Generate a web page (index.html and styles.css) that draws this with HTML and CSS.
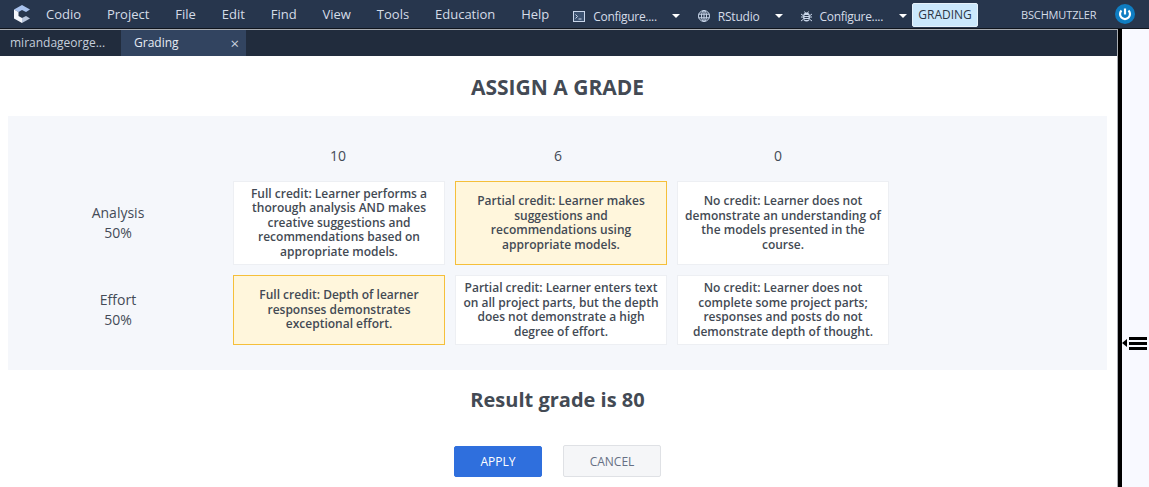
FILE: index.html
```html
<!DOCTYPE html>
<html lang="en">
<head>
  <meta charset="UTF-8" />
  <title>Grading</title>
  <link rel="stylesheet" href="styles.css">
</head>
<body>
  <header class="menubar">
    <svg class="logo" width="16" height="18" viewBox="0 0 16 18">
      <polygon points="8,0 16,4.500 12,7 8,5 4.500,7 0,4.500" fill="#a9c3ee"/>
      <polygon points="0,4.500 4.500,7 4.500,11 8,13 8,18 0,13.500" fill="#f4f6fb"/>
      <polygon points="8,13 12,11 16,13.500 8,18" fill="#b9c6dc"/>
    </svg>
    <nav class="menu">
      <span>Codio</span><span>Project</span><span>File</span><span>Edit</span><span>Find</span><span>View</span><span>Tools</span><span>Education</span><span>Help</span>
    </nav>
    <div class="runner runner-first">
      <svg width="12" height="11" viewBox="0 0 12 11" fill="none" stroke="#c9d6ea"><rect x="0.500" y="0.500" width="11" height="10" fill="#3c5270"/><path d="M2.500 3.500l2 2-2 2M5.500 8h3"/></svg>
      <span class="runner-name runner-name-cut">Configure....</span>
      <i class="caret"></i>
    </div>
    <div class="runner runner-second">
      <svg width="12" height="12" viewBox="0 0 12 12" fill="none" stroke="#c9d6ea"><circle cx="6" cy="6" r="5.500"/><ellipse cx="6" cy="6" rx="2.500" ry="5.500"/><path d="M0.500 4.200h11M0.500 7.800h11M6 .5v11"/></svg>
      <span class="runner-name runner-name-tight">RStudio</span>
      <i class="caret"></i>
    </div>
    <div class="runner runner-third">
      <svg width="11" height="12" viewBox="0 0 11 12" fill="none">
        <ellipse cx="5.500" cy="7" rx="3.500" ry="4.500" fill="#c9d6ea"/>
        <path d="M3.500 5.500h4M3.500 7.500h4M3.500 9.500h4" stroke="#27364d"/>
        <path d="M3.500 1.500l1 1.500M7.500 1.500l-1 1.500M0 4l2 1.500M11 4L9 5.500M0 7h2M11 7H9M0 11l2-1.500M11 11L9 9.500" stroke="#c9d6ea"/>
      </svg>
      <span class="runner-name runner-name-cut">Configure....</span>
      <i class="caret caret-wide"></i>
    </div>
    <button class="grading-btn">GRADING</button>
    <span class="username">BSCHMUTZLER</span>
    <svg class="power" width="20" height="20" viewBox="0 0 20 20">
      <circle cx="10" cy="10" r="10" fill="#0f7dc2"/>
      <path d="M6.500 6.500a5 5 0 1 0 7 0" fill="none" stroke="#fff" stroke-width="2.200"/>
      <path d="M10 4.500v6" stroke="#fff" stroke-width="2.200"/>
    </svg>
  </header>

  <div class="workspace">
    <div class="left-pane">
      <div class="tabs">
        <div class="tab">mirandageorge...</div>
        <div class="tab tab-active"><span>Grading</span><span class="tab-close">×</span></div>
      </div>
      <main class="grade-page">
        <h1>ASSIGN A GRADE</h1>
        <section class="rubric">
          <div class="rubric-head">
            <div></div>
            <div>10</div>
            <div>6</div>
            <div>0</div>
          </div>
          <div class="rubric-row row-tall">
            <div class="criterion">Analysis<br>50%</div>
            <div class="cell">Full credit: Learner performs a thorough analysis AND makes creative suggestions and recommendations based on appropriate models.</div>
            <div class="cell selected">Partial credit: Learner makes suggestions and recommendations using appropriate models.</div>
            <div class="cell">No credit: Learner does not demonstrate an understanding of the models presented in the course.</div>
          </div>
          <div class="rubric-row row-short">
            <div class="criterion">Effort<br>50%</div>
            <div class="cell selected">Full credit: Depth of learner responses demonstrates exceptional effort.</div>
            <div class="cell">Partial credit: Learner enters text on all project parts, but the depth does not demonstrate a high degree of effort.</div>
            <div class="cell">No credit: Learner does not complete some project parts; responses and posts do not demonstrate depth of thought.</div>
          </div>
        </section>
        <h2>Result grade is 80</h2>
        <div class="actions">
          <button class="btn btn-apply">APPLY</button>
          <button class="btn btn-cancel">CANCEL</button>
        </div>
      </main>
    </div>
    <aside class="right-pane">
      <div class="handle">
        <i class="handle-arrow"></i>
        <div class="handle-lines"><b></b><b></b><b></b></div>
      </div>
    </aside>
  </div>
</body>
</html>
```

FILE: styles.css
```css
html, body {
  margin: 0;
  padding: 0;
  height: 487px;
  overflow: hidden;
}

body {
  font-family: 'Open Sans', sans-serif;
  color: #444b57;
  background: #fff;
}

/* Top menu */
.menubar {
  display: flex;
  align-items: center;
  height: 29px;
  box-sizing: border-box;
  padding-left: 14px;
  border-bottom: 1px solid #10151d;
  background: #27364d;
  color: #d5dce8;
  font-size: 13px;
}

.logo {
  flex: none;
}

.menu {
  display: flex;
  gap: 25.900px;
  margin: 0 0 1px 16px;
  white-space: nowrap;
}

.runner {
  display: flex;
  align-items: center;
  margin-top: 4px;
  white-space: nowrap;
  font-size: 12px;
}

.runner-name {
  margin-left: 8px;
}

.runner-name-cut {
  letter-spacing: -0.3px;
}

.runner-name-tight {
  letter-spacing: -0.2px;
}

.runner-first { margin-left: 24px; }
.runner-second { margin-left: 18px; }
.runner-third { margin-left: 18px; }

.caret {
  width: 0;
  height: 0;
  margin-left: 15px;
  border-left: 4px solid transparent;
  border-right: 4px solid transparent;
  border-top: 4px solid #fff;
}

.caret-wide {
  margin-left: 16px;
}

.grading-btn {
  margin: 1px 0 0 5px;
  width: 66px;
  height: 24px;
  padding: 0;
  border: 1px solid #e6f2fb;
  border-radius: 2px;
  background: #cbe8fc;
  color: #2b3645;
  font: 12px 'Open Sans', sans-serif;
}

.username {
  margin-left: 43px;
  font-size: 11px;
  letter-spacing: -0.15px;
}

.power {
  margin-left: 19px;
}

/* Panes */
.workspace {
  display: flex;
  height: 458px;
  background: #000;
}

.left-pane {
  width: 1118px;
  box-sizing: border-box;
  border-right: 1px solid #a9adb2;
  background: #fff;
}

.tabs {
  display: flex;
  height: 26px;
  border-top: 1px solid #a9adb2;
  background: #212c3d;
  font-size: 12px;
  color: #c5cedb;
}

.tab {
  width: 121px;
  box-sizing: border-box;
  padding-left: 10px;
  line-height: 26px;
  white-space: nowrap;
}

.tab-active {
  width: 125px;
  display: flex;
  justify-content: space-between;
  padding: 0 7px 0 13px;
  background: #324460;
  color: #e6ebf3;
}

.tab-close {
  font-size: 15px;
  color: #c9d1dd;
}

.right-pane {
  flex: 1;
  margin-left: 4px;
  background: #f8f9ff;
}

.handle {
  display: flex;
  align-items: center;
  margin: 308px 2px 0 0;
}

.handle-arrow {
  width: 0;
  height: 0;
  border-top: 4px solid transparent;
  border-bottom: 4px solid transparent;
  border-right: 5px solid #000;
}

.handle-lines {
  flex: 1;
  margin-left: 2px;
}

.handle-lines b {
  display: block;
  height: 2.500px;
  margin-bottom: 2.500px;
  background: #000;
}

.handle-lines b:last-child {
  margin-bottom: 0;
}

/* Grade form */
.grade-page {
  height: 431px;
  padding-right: 2px;
  overflow: hidden;
  text-align: center;
}

h1 {
  margin: 17px 0 15px;
  font-size: 21px;
  line-height: 28px;
  font-weight: 700;
  color: #434a54;
}

.rubric {
  display: flex;
  flex-direction: column;
  gap: 10px;
  margin: 0 8px;
  padding: 22px 0 25px;
  background: #f5f7fb;
  font-size: 12px;
  line-height: 14.500px;
}

.rubric-head {
  display: grid;
  grid-template-columns: repeat(4, 220px);
  height: 33px;
  font-size: 14px;
  line-height: 36px;
}

.rubric-row {
  display: grid;
  grid-template-columns: 215px 212px 212px 212px;
  gap: 10px;
}

.row-tall { height: 84px; }
.row-short { height: 70px; }

.criterion {
  align-self: center;
  padding-left: 5px;
  font-size: 14px;
  line-height: 20px;
}

.cell {
  display: flex;
  align-items: center;
  justify-content: center;
  box-sizing: border-box;
  padding: 0 7px;
  border: 1px solid #edeff3;
  background: #fff;
  font-weight: 600;
  color: #434a54;
}

.cell.selected {
  border-color: #f5bf3a;
  background: #fff6dc;
}

h2 {
  margin: 16px 0 31px;
  font-size: 20px;
  line-height: 28px;
  font-weight: 700;
  color: #434a54;
}

.actions {
  display: flex;
  justify-content: center;
  align-items: center;
  gap: 21px;
}

.btn {
  padding: 0;
  border-radius: 2px;
  font: 12px 'Open Sans', sans-serif;
}

.btn-apply {
  width: 88px;
  height: 31px;
  border: 1px solid #2f6fdd;
  background: #2f6fdd;
  color: #fff;
}

.btn-cancel {
  width: 98px;
  height: 32px;
  border: 1px solid #dfe1e5;
  background: #f5f6f8;
  color: #667084;
}
```
